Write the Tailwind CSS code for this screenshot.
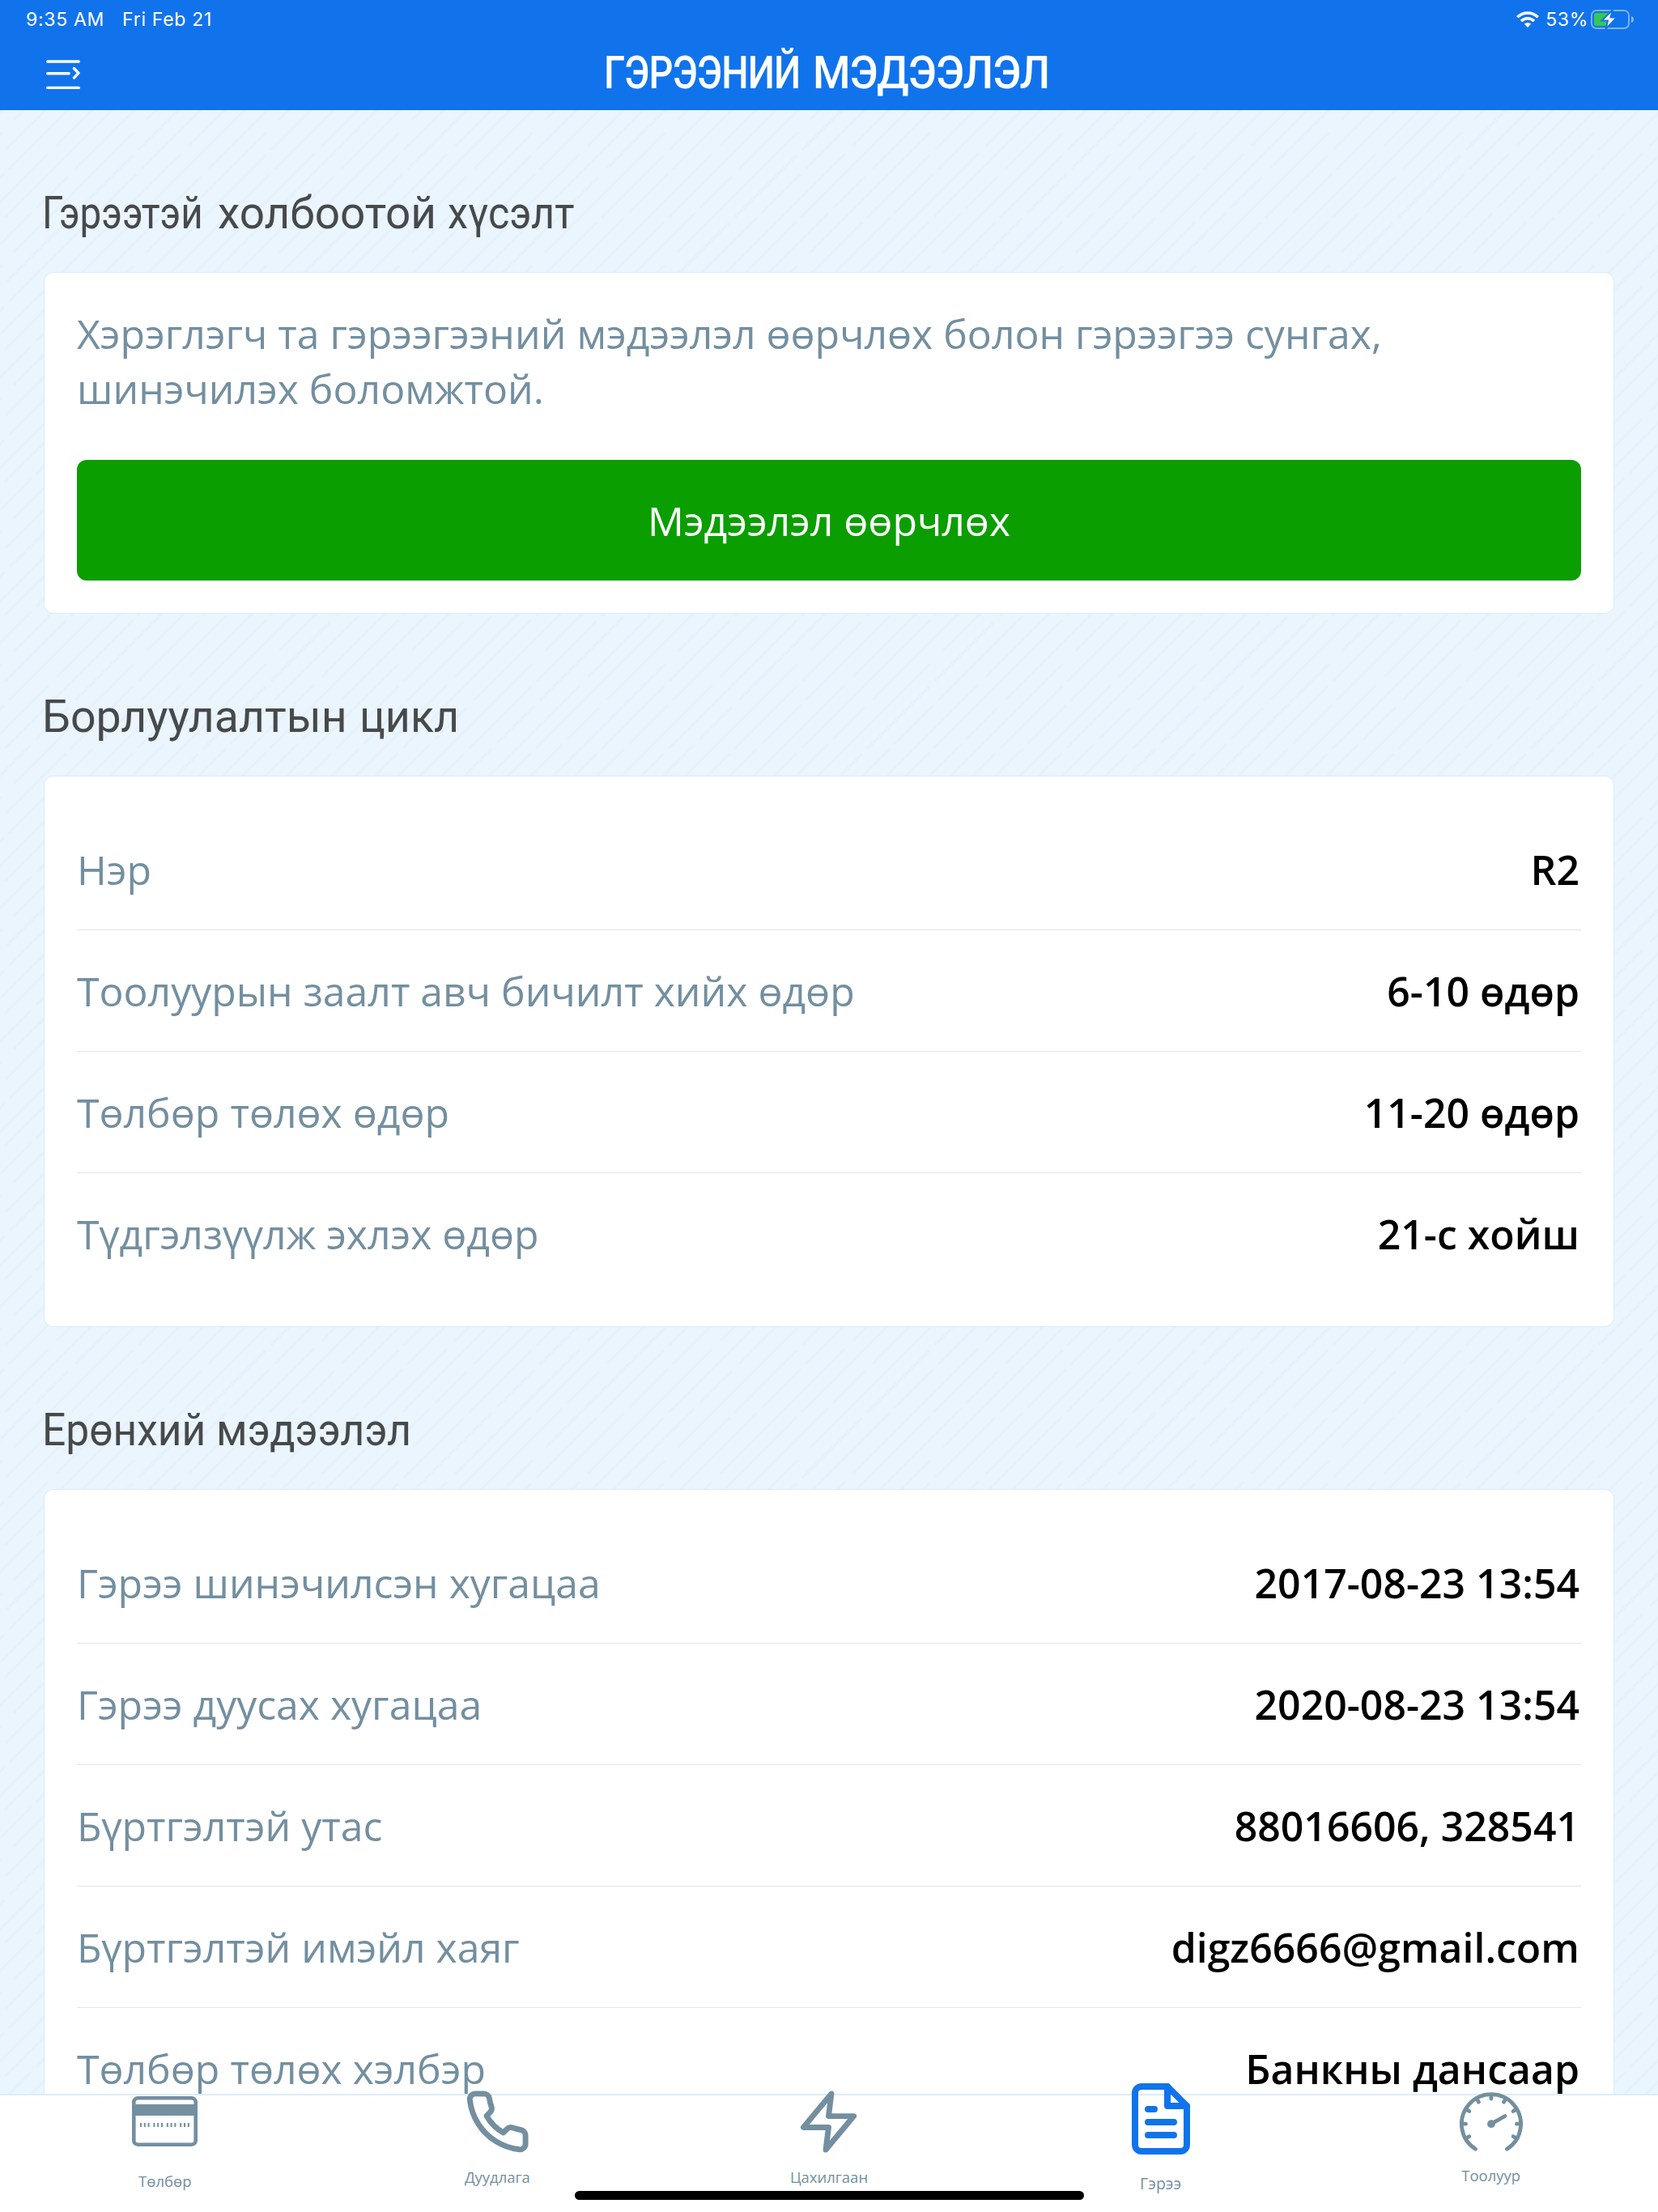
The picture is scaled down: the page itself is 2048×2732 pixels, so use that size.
<!DOCTYPE html>
<html lang="mn">

<head>
  <meta charset="UTF-8">
  <meta name="viewport" content="width=device-width, initial-scale=1.0">
  <title>Гэрээний мэдээлэл</title>
  <script src="https://cdn.jsdelivr.net/npm/@tailwindcss/browser@4"></script>
</head>

<body class="bg-[#eaf5fe] font-['Open_Sans','Noto_Sans',sans-serif]">

  <div class="relative w-[2048px] h-[2732px] flex flex-col overflow-hidden">

    <!-- striped background -->
    <svg class="absolute inset-0" width="2048" height="2732">
      <defs>
        <g id="dashes" fill="none" stroke="#e6f1fb" stroke-width="3.4" stroke-linecap="round">
          <path d="M18 147L174 -9M8 184L80 112M88 104L163 29M12 208L114 106M122 98L168 52M71 179L223 27M7 267L163 111M95 207L202 100M46 256L83 219" />
        </g>
        <pattern id="stripes" width="164" height="164" patternUnits="userSpaceOnUse">
          <use href="#dashes" />
          <use href="#dashes" x="-164" />
          <use href="#dashes" x="164" />
          <use href="#dashes" y="-164" />
          <use href="#dashes" y="164" />
          <use href="#dashes" x="-164" y="-164" />
        </pattern>
      </defs>
      <rect width="2048" height="2732" fill="url(#stripes)" />
    </svg>

    <!-- header -->
    <header class="relative h-[136px] shrink-0 bg-[#1173ec] text-white">
      <div class="h-12 pl-[32px] pr-[30px] flex items-center justify-between font-['Inter',sans-serif] text-[23px] tracking-[0.7px]">
        <div class="flex gap-[22px]">
          <span>9:35 AM</span>
          <span>Fri Feb 21</span>
        </div>
        <div class="flex items-center">
          <svg width="28" height="20" viewBox="0 0 28 20" fill="none" stroke="#fff" stroke-width="3.6">
            <path d="M1.3 7.2a18 18 0 0 1 25.4 0M6 12a11.4 11.4 0 0 1 16 0" />
            <path d="M14 20l-4.2-4.4a6 6 0 0 1 8.4 0z" fill="#fff" stroke="none" />
          </svg>
          <span class="ml-[8px]">53%</span>
          <svg class="ml-[3px]" width="53" height="24" viewBox="0 0 53 24">
            <rect x="1" y="1" width="46" height="22" rx="6" fill="none" stroke="#fff" stroke-opacity=".45" stroke-width="2" />
            <path d="M50 8v8q3-1 3-4t-3-4z" fill="#fff" fill-opacity=".5" />
            <rect x="4" y="4" width="20" height="16" rx="3" fill="#34c759" />
            <path d="M27 0L13.500 13.500h7.500L18.500 24 32 9.500h-7.500z" fill="#fff" stroke="#1173ec" stroke-width="2" />
          </svg>
        </div>
      </div>
      <div class="h-[88px] grid grid-cols-[1fr_auto_1fr] items-center">
        <svg class="ml-[57px]" width="42" height="38" viewBox="0 0 42 38" fill="none" stroke="#fff" stroke-width="3.4" stroke-linecap="round">
          <path d="M1.700 3h38.600M1.700 17.700h26.600M1.700 35.400h38.600" />
          <path d="M34.500 11.500l5.500 5.700-5.500 5.900" stroke-linejoin="round" />
        </svg>
        <h1 class="-mt-[4px] pr-[10px] flex font-['Roboto',sans-serif] font-medium text-[56px] leading-[88px] -tracking-[1px] whitespace-nowrap">
          <span class="w-[258px] origin-left scale-x-84">ГЭРЭЭНИЙ</span>
          <span class="w-[288px] origin-left scale-x-95">МЭДЭЭЛЭЛ</span>
        </h1>
      </div>
    </header>

    <!-- content -->
    <main class="relative flex-1 min-h-0 overflow-hidden px-[54px] text-[49.95px] leading-[68px] text-[#738fa0]">

      <h2 class="-ml-[2px] h-[200px] pt-[93px] flex whitespace-nowrap font-['Roboto',sans-serif] text-[56px] text-[#47494b]">
        <span class="w-[217px] origin-left scale-x-85">Гэрээтэй</span>
        <span class="w-[284px] origin-left scale-x-98">холбоотой</span>
        <span class="w-[170px] origin-left scale-x-90">хүсэлт</span>
      </h2>
      <section class="h-[422px] px-10 pt-[41px] bg-white border border-[#d8edfb] rounded-xl">
        <p class="w-[1700px]">Хэрэглэгч та гэрээгээний мэдээлэл өөрчлөх болон гэрээгээ сунгах, шинэчилэх боломжтой.</p>
        <button class="mt-[54px] w-full h-[149px] rounded-xl bg-[#0b9e00] text-white">Мэдээлэл өөрчлөх</button>
      </section>

      <h2 class="-ml-[2px] h-[200px] pt-[93px] flex whitespace-nowrap font-['Roboto',sans-serif] text-[56px] text-[#47494b]">
        <span class="w-[392px] origin-left scale-x-99">Борлуулалтын</span>
        <span class="w-[130px] origin-left scale-x-96">цикл</span>
      </h2>
      <section class="px-10 pt-10 pb-[39px] bg-white border border-[#d8edfb] rounded-xl">
        <dl class="divide-y divide-[#e3e5e6]">
          <div class="h-[150px] flex items-center justify-between"><dt>Нэр</dt><dd class="font-semibold text-black pr-[2px]">R2</dd></div>
          <div class="h-[150px] flex items-center justify-between"><dt>Тоолуурын заалт авч бичилт хийх өдөр</dt><dd class="font-semibold text-black pr-[2px]">6-10 өдөр</dd></div>
          <div class="h-[150px] flex items-center justify-between"><dt>Төлбөр төлөх өдөр</dt><dd class="font-semibold text-black pr-[2px]">11-20 өдөр</dd></div>
          <div class="h-[150px] flex items-center justify-between"><dt>Түдгэлзүүлж эхлэх өдөр</dt><dd class="font-semibold text-black pr-[2px]">21-с хойш</dd></div>
        </dl>
      </section>

      <h2 class="-ml-[2px] h-[200px] pt-[93px] flex whitespace-nowrap font-['Roboto',sans-serif] text-[56px] text-[#47494b]">
        <span class="w-[215px] origin-left scale-x-92">Ерөнхий</span>
        <span class="w-[250px] origin-left scale-x-93">мэдээлэл</span>
      </h2>
      <section class="px-10 pt-10 pb-[39px] bg-white border border-[#d8edfb] rounded-xl">
        <dl class="divide-y divide-[#e3e5e6]">
          <div class="h-[150px] flex items-center justify-between"><dt>Гэрээ шинэчилсэн хугацаа</dt><dd class="font-semibold text-black pr-[2px]">2017-08-23 13:54</dd></div>
          <div class="h-[150px] flex items-center justify-between"><dt>Гэрээ дуусах хугацаа</dt><dd class="font-semibold text-black pr-[2px]">2020-08-23 13:54</dd></div>
          <div class="h-[150px] flex items-center justify-between"><dt>Бүртгэлтэй утас</dt><dd class="font-semibold text-black pr-[2px]">88016606, 328541</dd></div>
          <div class="h-[150px] flex items-center justify-between"><dt>Бүртгэлтэй имэйл хаяг</dt><dd class="font-semibold text-black pr-[2px]">digz6666@gmail.com</dd></div>
          <div class="h-[150px] flex items-center justify-between"><dt>Төлбөр төлөх хэлбэр</dt><dd class="font-semibold text-black pr-[2px]">Банкны дансаар</dd></div>
        </dl>
      </section>
    </main>

    <!-- tab bar -->
    <nav class="relative h-[146px] shrink-0 grid grid-cols-5 bg-white border-t-2 border-[#d9edfc] text-[#738fa0] text-[18.5px] leading-6">
      <a class="pr-[2px] flex flex-col items-center">
        <svg class="mt-px" width="81" height="62" viewBox="0 0 81 62" fill="none" stroke="currentColor">
          <rect x="2.300" y="2.300" width="76.400" height="57.400" rx="5" stroke-width="4.600" />
          <path d="M2 17h77" stroke-width="14" />
          <path d="M10 35.500h61" stroke-width="5" stroke-dasharray="2 2.800 2 2.800 2 4.800" />
        </svg>
        <span class="mt-[31px]">Төлбөр</span>
      </a>
      <a class="flex flex-col items-center">
        <svg class="-mt-[9px]" width="83" height="83" viewBox="0 0 24 24" fill="none" stroke="currentColor" stroke-width="2" stroke-linecap="round" stroke-linejoin="round">
          <path d="M22 16.920v3a2 2 0 0 1-2.180 2 19.790 19.790 0 0 1-8.630-3.070 19.500 19.500 0 0 1-6-6 19.790 19.790 0 0 1-3.070-8.670A2 2 0 0 1 4.110 2h3a2 2 0 0 1 2 1.720 12.840 12.840 0 0 0 .7 2.810 2 2 0 0 1-.45 2.110L8.090 9.910a16 16 0 0 0 6 6l1.270-1.270a2 2 0 0 1 2.110-.45 12.840 12.840 0 0 0 2.810.7A2 2 0 0 1 22 16.920z" />
        </svg>
        <span class="mt-[15px]">Дуудлага</span>
      </a>
      <a class="flex flex-col items-center">
        <svg class="-mt-[9px]" width="83" height="83" viewBox="0 0 24 24" fill="none" stroke="currentColor" stroke-width="2" stroke-linecap="round" stroke-linejoin="round">
          <path d="M13 2L3 14h9l-1 8 10-12h-9l1-8z" />
        </svg>
        <span class="mt-[15px]">Цахилгаан</span>
      </a>
      <a class="flex flex-col items-center">
        <svg class="-mt-[19px] text-[#1173ec]" width="96" height="96" viewBox="0 0 24 24" fill="none" stroke="currentColor" stroke-width="2" stroke-linecap="round" stroke-linejoin="round">
          <path d="M14 2H6a2 2 0 0 0-2 2v16a2 2 0 0 0 2 2h12a2 2 0 0 0 2-2V8z" />
          <path d="M14 2v6h6M16 13H8M16 17H8M10 9H8" />
        </svg>
        <span class="mt-[20px] text-[19.5px]">Гэрээ</span>
      </a>
      <a class="pr-[3px] flex flex-col items-center">
        <svg class="-mt-[4px]" width="78" height="74" viewBox="0 0 78 74" fill="none" stroke="currentColor" stroke-width="4.800" stroke-linecap="round">
          <path d="M19.500 70.200A36.600 36.600 0 1 1 58.500 70.200" />
          <path d="M39 4v4M21.500 8.700l2 3.500M56.500 8.700l-2 3.500M8.700 21.700l3.200 1.800M69.300 21.700l-3.200 1.800M4 39.200h3.500M74 39.200h-3.500M8.700 56.500l3.200-1.800M69.300 56.500l-3.200-1.800M39 39.200l17-9.700" />
          <circle cx="39" cy="39.200" r="4.900" fill="currentColor" stroke="none" />
        </svg>
        <span class="mt-[17px]">Тоолуур</span>
      </a>
      <div class="absolute left-[710px] top-[118px] w-[629px] h-[11px] rounded-full bg-black"></div>
    </nav>

  </div>

</body>

</html>
